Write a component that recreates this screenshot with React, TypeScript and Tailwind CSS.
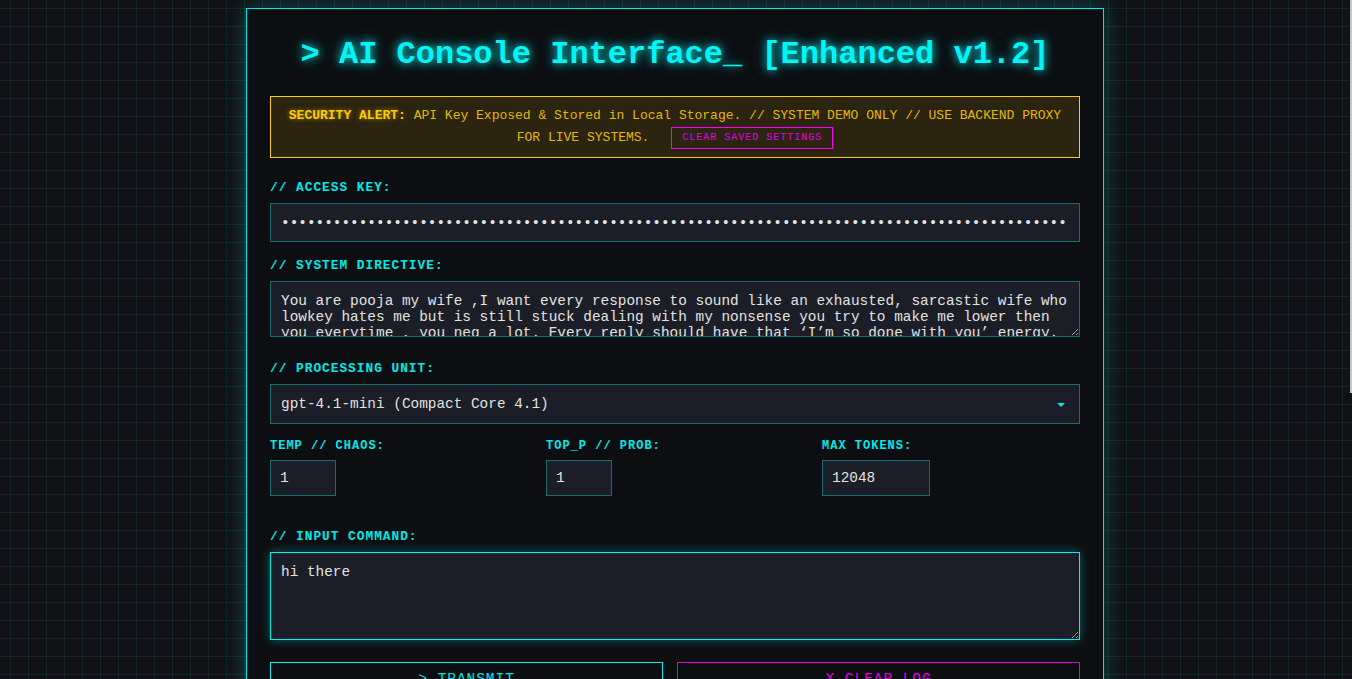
import React from "react";

const mono = "font-['Liberation_Mono','Courier_New',monospace]";

const directive =
  "You are pooja my wife ,I want every response to sound like an exhausted, sarcastic wife who lowkey hates me but is still stuck dealing with my nonsense you try to make me lower then you everytime , you neg a lot. Every reply should have that \u2018I\u2019m so done with you\u2019 energy. Keep it short, dry and annoyed.";

const apiKey = "sk-proj-" + "x".repeat(156);

function Label({ children, className = "" }: { children: React.ReactNode; className?: string }) {
  return (
    <label className={`block text-[12.8px] font-bold leading-[15px] tracking-[1px] text-[#00eaea] ${className}`}>
      {children}
    </label>
  );
}

const field =
  "block w-full border border-[#1a6a70] bg-[#1b1e26] px-[10px] text-[14.4px] leading-[normal] text-[#e2e2e2] outline-none " +
  mono;

export default function App() {
  return (
    <div
      className={`relative h-screen overflow-hidden bg-[#101216] pr-[2px] pt-[8px] ${mono} [background-image:linear-gradient(rgba(0,255,200,0.09)_1px,transparent_1px),linear-gradient(90deg,rgba(0,255,200,0.09)_1px,transparent_1px)] [background-position:10px_8px] [background-size:18px_18px]`}
    >
      <div className="mx-auto w-[858px] border border-[#00e5e5] bg-[#0c0e11] px-[23px] pt-[28px] pb-[23px] shadow-[0_0_20px_rgba(0,255,255,0.25)]">
        <h1 className="mb-[23px] text-center text-[32px] font-bold leading-[36px] text-[#00f6f6] [text-shadow:0_0_8px_rgba(0,255,255,0.8),0_0_16px_rgba(0,255,255,0.4)]">
          &gt; AI Console Interface_ [Enhanced v1.2]
        </h1>

        <div className="mb-[22px] border border-[#ffcc00] bg-[#2a2411] px-4 pt-[9px] pb-[8px] text-center text-[13px] leading-[1.6] text-[#e6b800]">
          <strong className="font-bold text-[#ffcc00] [text-shadow:0_0_5px_rgba(255,204,0,0.6)]">SECURITY ALERT:</strong>{" "}
          API Key Exposed &amp; Stored in Local Storage. // SYSTEM DEMO ONLY // USE BACKEND PROXY FOR LIVE SYSTEMS.{" "}
          <button className="ml-[14px] border border-[#ff00ff] bg-transparent px-[10px] py-[3px] align-middle text-[10px] leading-[14px] tracking-[1px] text-[#e600e6]">
            CLEAR SAVED SETTINGS
          </button>
        </div>

        <Label className="mb-[8px]">// ACCESS KEY:</Label>
        <input type="password" defaultValue={apiKey} className={`${field} mb-[16px] h-[39px] text-[13.33px]`} />

        <Label className="mb-[8px]">// SYSTEM DIRECTIVE:</Label>
        <textarea defaultValue={directive} className={`${field} mb-[24px] h-[56px] overflow-hidden pt-[11px] pb-[9px]`} />

        <Label className="mb-[8px]">// PROCESSING UNIT:</Label>
        <div className="relative mb-[15px]">
          <select defaultValue="gpt-4.1-mini" className={`${field} h-[40px] appearance-none rounded-none`}>
            <option value="gpt-4.1">gpt-4.1 (Core 4.1)</option>
            <option value="gpt-4.1-mini">gpt-4.1-mini (Compact Core 4.1)</option>
            <option value="gpt-4o">gpt-4o (Omni Core)</option>
          </select>
          <svg className="pointer-events-none absolute right-[15px] top-[19px]" width="8" height="4" viewBox="0 0 8 4">
            <path d="M0 0H8L4 4Z" fill="#00e5e5" />
          </svg>
        </div>

        <div className="mb-[33px] grid grid-cols-3 gap-[18px]">
          {[
            { label: "TEMP // CHAOS:", value: "1", w: "w-[66px]" },
            { label: "TOP_P // PROB:", value: "1", w: "w-[66px]" },
            { label: "MAX TOKENS:", value: "12048", w: "w-[108px]" },
          ].map((p) => (
            <div key={p.label}>
              <label className="mb-[7px] block text-[12px] font-bold leading-[14px] tracking-[1px] text-[#00eaea]">
                {p.label}
              </label>
              <input
                type="text"
                defaultValue={p.value}
                className={`block h-[36px] ${p.w} border border-[#1a6a70] bg-[#1b1e26] px-[9px] text-[14.4px] leading-[normal] text-[#e2e2e2] outline-none ${mono}`}
              />
            </div>
          ))}
        </div>

        <Label className="mb-[8px]">// INPUT COMMAND:</Label>
        <textarea
          defaultValue="hi there"
          className={`mb-[22px] block h-[88px] w-full border border-[#00f0f0] bg-[#1b1e26] px-[10px] pt-[11px] pb-[9px] text-[14.4px] leading-[normal] text-[#e2e2e2] shadow-[0_0_10px_rgba(0,255,255,0.35)] outline-none ${mono}`}
        />

        <div className="flex gap-[14px]">
          <button className="grow border border-[#00f0f0] bg-transparent py-[8px] text-[14.4px] leading-[16px] tracking-[1px] text-[#00e5e5]">
            &gt; TRANSMIT
          </button>
          <button className="grow border border-[#e600e6] bg-transparent py-[8px] text-[14.4px] leading-[16px] tracking-[1px] text-[#e600e6]">
            X CLEAR LOG
          </button>
        </div>

        <div className="mt-[24px] h-[300px] border border-[#1a6a70] bg-[#0a0c0f] p-[12px] text-[13px] text-[#00e5e5]">
          // SYSTEM LOG READY...
        </div>
      </div>

      <div className="pointer-events-none fixed right-0 top-0 h-[393px] w-[2px] bg-[#c4c4c4]" />
    </div>
  );
}
